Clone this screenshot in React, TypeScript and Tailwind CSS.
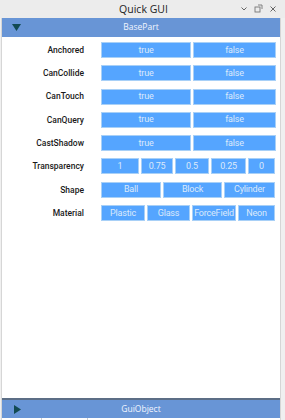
import React from "react";

type Row = { label: string; options: { text: string; w: string }[] };

const rows: Row[] = [
  { label: "Anchored", options: [{ text: "true", w: "w-[90px]" }, { text: "false", w: "w-[83px]" }] },
  { label: "CanCollide", options: [{ text: "true", w: "w-[90px]" }, { text: "false", w: "w-[83px]" }] },
  { label: "CanTouch", options: [{ text: "true", w: "w-[90px]" }, { text: "false", w: "w-[83px]" }] },
  { label: "CanQuery", options: [{ text: "true", w: "w-[90px]" }, { text: "false", w: "w-[83px]" }] },
  { label: "CastShadow", options: [{ text: "true", w: "w-[90px]" }, { text: "false", w: "w-[83px]" }] },
  {
    label: "Transparency",
    options: [
      { text: "1", w: "w-[38px]" },
      { text: "0.75", w: "w-[32px]" },
      { text: "0.5", w: "w-[34px]" },
      { text: "0.25", w: "w-[35px]" },
      { text: "0", w: "w-[27px]" },
    ],
  },
  {
    label: "Shape",
    options: [
      { text: "Ball", w: "w-[60px]" },
      { text: "Block", w: "w-[59px]" },
      { text: "Cylinder", w: "w-[51px]" },
    ],
  },
  {
    label: "Material",
    options: [
      { text: "Plastic", w: "w-[44px]" },
      { text: "Glass", w: "w-[43px]" },
      { text: "ForceField", w: "w-[44px]" },
      { text: "Neon", w: "w-[37px]" },
    ],
  },
];

export default function App() {
  return (
    <div
      className="w-[285px] h-[420px] bg-[#f0f0f0] flex flex-col overflow-hidden"
      style={{ fontFamily: "'Open Sans', 'Noto Sans', sans-serif" }}
    >
      {/* title bar */}
      <div className="h-[18px] flex items-center relative bg-[#ececec] text-[#222] shrink-0">
        <div className="flex-1 text-center text-[10.5px] leading-none pl-[2px]">Quick GUI</div>
        <div className="absolute right-[8px] top-[4px] flex items-center gap-[6px] text-[#666]">
          <svg width="8" height="8" viewBox="0 0 8 8">
            <path d="M1.5 2.5 L4 5 L6.5 2.5" stroke="#666" strokeWidth="1" fill="none" />
          </svg>
          <svg width="9" height="9" viewBox="0 0 9 9">
            <rect x="1" y="3" width="5" height="5" stroke="#777" strokeWidth="0.9" fill="none" />
            <path d="M4 1 H8 V5" stroke="#777" strokeWidth="0.9" fill="none" />
          </svg>
          <svg width="8" height="8" viewBox="0 0 8 8">
            <path d="M1.5 1.5 L6.5 6.5 M6.5 1.5 L1.5 6.5" stroke="#666" strokeWidth="1" fill="none" />
          </svg>
        </div>
      </div>

      {/* window body */}
      <div className="flex-1 flex flex-col bg-white ml-[1px] mr-[4px] border-x border-[#d6d6d6]">
        <div className="h-[19px] bg-[#6895d6] flex items-center relative shrink-0">
          <svg className="absolute left-[10px] top-[6px]" width="9" height="7" viewBox="0 0 9 7">
            <path d="M0 0 H9 L4.5 7 Z" fill="#124a52" />
          </svg>
          <div className="flex-1 text-center text-[8.5px] text-[#f2f6ff] leading-none">BasePart</div>
        </div>

        <div className="flex flex-col gap-[7.3px] pt-[5px]">
          {rows.map((r) => (
            <div key={r.label} className="flex items-center h-[16px]">
              <div
                className="w-[83px] pr-[1px] text-right text-[8.5px] font-medium text-[#1a1a1a] leading-none"
                style={{ fontFamily: "Roboto, 'Noto Sans', sans-serif" }}
              >
                {r.label}
              </div>
              <div className="ml-[16px] flex gap-[2px]">
                {r.options.map((o) => (
                  <div
                    key={o.text}
                    className={`${o.w} h-[16px] bg-[#55a5ff] border border-[#a8d0f7] flex items-center justify-center text-[9px] tracking-[-0.2px] text-[#dce9fb] leading-none whitespace-nowrap`}
                    style={{ fontFamily: "Roboto, 'Liberation Sans', sans-serif" }}
                  >
                    {o.text}
                  </div>
                ))}
              </div>
            </div>
          ))}
        </div>

        <div className="flex-1" />

        <div className="h-[20px] bg-[#6895d6] border-t-2 border-[#5c6e86] flex items-center relative shrink-0">
          <svg className="absolute left-[12px] top-[5px]" width="7" height="9" viewBox="0 0 7 9">
            <path d="M0 0 L7 4.5 L0 9 Z" fill="#124a52" />
          </svg>
          <div className="flex-1 text-center text-[8.5px] text-[#f2f6ff] leading-none">GuiObject</div>
        </div>
        <div className="h-[2px] bg-white flex shrink-0">
          <div className="w-[40px] border-r border-[#cfcfcf]" />
          <div className="w-[46px] border-r border-[#cfcfcf]" />
        </div>
      </div>
    </div>
  );
}
